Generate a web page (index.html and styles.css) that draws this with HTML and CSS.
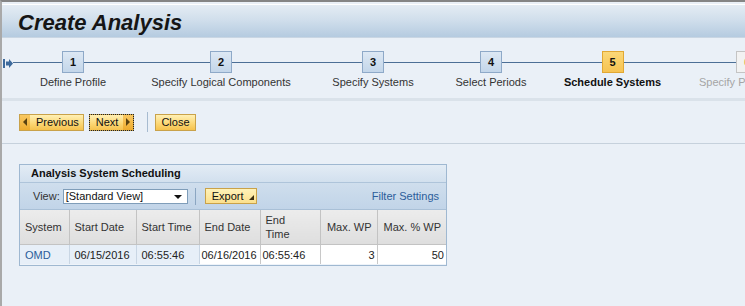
FILE: index.html
```html
<!DOCTYPE html>
<html lang="en">
<head>
  <meta charset="UTF-8">
  <title>Create Analysis</title>
  <link rel="stylesheet" href="styles.css">
</head>
<body>
  <div class="frame">
    <div class="title-bar">
      <h1>Create Analysis</h1>
    </div>

    <div class="roadmap">
      <svg class="road-start" width="10" height="9" viewBox="0 0 10 9">
        <rect x="0" y="0" width="2" height="9" fill="#3d6a9c"/>
        <path d="M3 2.5 H6 V0 L10 4.5 L6 9 V6.5 H3 Z" fill="#3d6a9c"/>
      </svg>
      <div class="steps">
        <div class="step">
          <div class="step-box">1</div>
          <div class="step-label">Define Profile</div>
        </div>
        <div class="step">
          <div class="step-box">2</div>
          <div class="step-label">Specify Logical Components</div>
        </div>
        <div class="step">
          <div class="step-box">3</div>
          <div class="step-label">Specify Systems</div>
        </div>
        <div class="step">
          <div class="step-box">4</div>
          <div class="step-label">Select Periods</div>
        </div>
        <div class="step current">
          <div class="step-box">5</div>
          <div class="step-label">Schedule Systems</div>
        </div>
        <div class="step disabled">
          <div class="step-box">6</div>
          <div class="step-label">Specify Parameters</div>
        </div>
      </div>
    </div>

    <div class="actions">
      <button class="btn btn-prev"><span class="btn-arrow"><i class="tri-left"></i></span>Previous</button>
      <button class="btn btn-next focused">Next<span class="btn-arrow"><i class="tri-right"></i></span></button>
      <span class="sep"></span>
      <button class="btn btn-close">Close</button>
    </div>

    <div class="content">
      <div class="panel">
        <div class="panel-title">Analysis System Scheduling</div>
        <div class="panel-toolbar">
          <span class="view-label">View:</span>
          <div class="select">[Standard View]<i class="tri-down"></i></div>
          <span class="sep small"></span>
          <button class="btn btn-export">Export<i class="tri-corner"></i></button>
          <a class="filter-link">Filter Settings</a>
        </div>
        <table class="grid">
          <colgroup>
            <col style="width:49px">
            <col style="width:67px">
            <col style="width:63px">
            <col style="width:61px">
            <col style="width:60px">
            <col style="width:57px">
            <col style="width:69px">
          </colgroup>
          <thead>
            <tr>
              <th>System</th>
              <th>Start Date</th>
              <th>Start Time</th>
              <th>End Date</th>
              <th>End<br>Time</th>
              <th class="num">Max. WP</th>
              <th class="num">Max. % WP</th>
            </tr>
          </thead>
          <tbody>
            <tr>
              <td class="ro link">OMD</td>
              <td class="ro">06/15/2016</td>
              <td class="ro">06:55:46</td>
              <td class="edit">06/16/2016</td>
              <td class="edit">06:55:46</td>
              <td class="edit num">3</td>
              <td class="edit num">50</td>
            </tr>
          </tbody>
        </table>
      </div>
    </div>
  </div>
</body>
</html>
```

FILE: styles.css
```css
body {
  margin: 0;
  font-family: "Liberation Sans", Arial, sans-serif;
  font-size: 11px;
  color: #333;
  background: #eaf0f7;
}

.frame {
  height: 306px;
  box-sizing: border-box;
  border-top: 2px solid #858585;
  border-left: 2px solid #a9a9a9;
  overflow: hidden;
}

.title-bar {
  height: 32px;
  margin-top: 2px;
  border-top: 1px solid #fff;
  background: linear-gradient(#e4ecf4, #d1dfec 45%, #b5cbe0);
  border-bottom: 1px solid #c9d6e3;
}

.title-bar h1 {
  margin: 0;
  padding: 6px 0 0 16px;
  font-size: 22px;
  font-style: italic;
  font-weight: bold;
  color: #151515;
  line-height: 24px;
}

.roadmap {
  display: flex;
  align-items: flex-start;
  height: 63px;
  padding-top: 13px;
  box-sizing: border-box;
  border-bottom: 3px solid #dae2ea;
}

.road-start {
  margin: 8px 0 0 1px;
  flex-shrink: 0;
}

/* columns follow the spacing of the original roadmap */
.steps {
  display: grid;
  grid-template-columns: 120px 176px 128px 108px 135px 134px;
  flex-shrink: 0;
  background: linear-gradient(#4c6f96, #4c6f96) no-repeat 0 11px / 100% 1px;
  white-space: nowrap;
}

.step {
  display: flex;
  flex-direction: column;
  align-items: center;
}

.step-box {
  width: 20px;
  height: 20px;
  border: 1px solid #8ea9c8;
  background: linear-gradient(#dde8f4, #c3d6ea);
  font-weight: bold;
  color: #111;
  text-align: center;
  line-height: 20px;
}

.step-label {
  margin-top: 2px;
  line-height: 14px;
  color: #333;
}

.step.current .step-box {
  background: linear-gradient(#fbd878, #f6c352);
  border-color: #e2a833;
}

.step.current .step-label {
  font-weight: bold;
  color: #111;
}

.step.disabled .step-box {
  background: #f2f2f2;
  border-color: #c4c4c4;
  color: #e0b060;
}

.step.disabled .step-label {
  color: #a5a5a5;
}

.actions {
  display: flex;
  align-items: center;
  gap: 5px;
  height: 42px;
  padding-left: 17px;
  border-bottom: 1px solid #c6d1dc;
}

.btn {
  display: inline-flex;
  align-items: center;
  height: 17px;
  padding: 0 6px;
  box-sizing: border-box;
  font-family: inherit;
  font-size: 11px;
  color: #111;
  border: 1px solid #c9a24a;
  background: linear-gradient(#fff0b5, #fcd877 55%, #f6c24d);
  border-radius: 0;
}

.btn-arrow {
  display: inline-flex;
  align-items: center;
  justify-content: center;
  width: 10px;
  align-self: stretch;
  background: linear-gradient(#f9c862, #eeac2f);
}

.btn-prev {
  padding: 0 4px 0 0;
  gap: 6px;
}

.btn-next {
  padding-right: 0;
  gap: 5px;
}

.btn-close {
  padding: 0 5px;
}

.btn.focused {
  outline: 1px dotted #222;
  outline-offset: -1px;
}

.tri-left {
  border: 4px solid transparent;
  border-right: 4px solid #5a4210;
  border-left: 0;
}

.tri-right {
  border: 4px solid transparent;
  border-left: 4px solid #5a4210;
  border-right: 0;
}

.sep {
  width: 1px;
  height: 20px;
  margin: 0 2px 0 8px;
  background: #a7bbd0;
}

.content {
  padding: 20px 0 0 17px;
}

.panel {
  width: 428px;
  box-sizing: border-box;
  border: 1px solid #9fb8d1;
  background: #eef3f9;
  padding-bottom: 1px;
}

.panel-title {
  height: 17px;
  padding-left: 11px;
  line-height: 17px;
  font-weight: bold;
  color: #111;
  background: linear-gradient(#e3ecf5, #d2e0ee);
  border-bottom: 1px solid #aec4da;
}

.panel-toolbar {
  display: flex;
  align-items: center;
  height: 26px;
  padding: 0 7px 0 13px;
  background: linear-gradient(#cfdeed, #c1d4e8);
  border-bottom: 1px solid #a9c0d7;
}

.view-label {
  color: #333;
  margin-right: 3px;
}

.select {
  position: relative;
  width: 125px;
  height: 15px;
  box-sizing: border-box;
  border: 1px solid #7f9db9;
  background: #fff;
  padding-left: 2px;
  line-height: 13px;
  color: #111;
}

.tri-down {
  position: absolute;
  right: 5px;
  top: 5px;
  border: 4px solid transparent;
  border-top: 4px solid #111;
  border-bottom: 0;
}

.sep.small {
  height: 17px;
  margin: 0 9px 0 7px;
  background: #8ba6c2;
}

.btn-export {
  position: relative;
  height: 16px;
  padding: 0 12px 0 6px;
  background: linear-gradient(#fff2b8, #fbe08d);
}

.tri-corner {
  position: absolute;
  right: 2px;
  bottom: 3px;
  border-left: 5px solid transparent;
  border-bottom: 5px solid #3a2d10;
}

.filter-link {
  margin-left: auto;
  color: #2b5d9a;
}

.grid {
  border-collapse: collapse;
  table-layout: fixed;
  width: 426px;
}

.grid th {
  height: 34px;
  padding: 0 5px;
  font-weight: normal;
  text-align: left;
  color: #333;
  line-height: 14px;
  background: linear-gradient(#ececec, #dedede);
  border: 1px solid #c3c3c3;
  border-top: 0;
}

.grid th:first-child,
.grid td:first-child {
  border-left: 0;
}

.grid th:last-child,
.grid td:last-child {
  border-right: 0;
}

.grid td {
  height: 19px;
  padding: 0 5px;
  color: #222;
  border: 1px solid #c9d6e4;
  border-bottom: 0;
  white-space: nowrap;
}

.grid td.ro {
  background: #e7eff8;
}

.grid td.edit {
  background: #fff;
  padding: 0 2px;
  border-color: #c8c8c8;
}

.grid td.link {
  color: #2b5d9a;
}

.grid .num {
  text-align: right;
}
```
